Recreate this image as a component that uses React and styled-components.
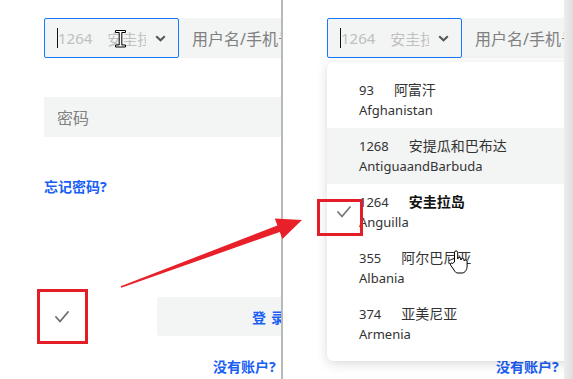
import React from 'react';
import styled, { createGlobalStyle } from 'styled-components';

const GlobalStyle = createGlobalStyle`
  html, body {
    margin: 0;
    padding: 0;
    background: #fff;
  }
  body {
    font-family: 'Noto Sans', 'Noto Sans CJK SC', sans-serif;
  }
`;

const Stage = styled.div`
  position: relative;
  display: flex;
  width: 573px;
  height: 379px;
  overflow: hidden;
  background: #fff;
`;

const Panel = styled.div`
  position: relative;
  flex: none;
  width: 281px;
  height: 100%;
  overflow: hidden;
`;

const Divider = styled.div`
  flex: none;
  width: 2px;
  background: #b9b9b9;
`;

const EdgeShadow = styled.div`
  flex: 1;
  background: linear-gradient(to right, #ededed, #dedede);
`;

const Form = styled.div`
  display: flex;
  flex-direction: column;
  width: 400px;
  padding: 18px 0 0 44px;
`;

const TopRow = styled.div`
  display: flex;
  height: 40px;
`;

const SelectWrap = styled.div`
  position: relative;
  flex: none;
  width: 135px;
`;

const SelectBox = styled.div`
  box-sizing: border-box;
  display: flex;
  align-items: center;
  height: 40px;
  padding: 0 12px 0 13px;
  border: 1px solid #1677ff;
  border-radius: 2px;
  background: #f3f4f4;
  font-size: 15px;
  color: #c0c0c0;
`;

const Caret = styled.span`
  width: 1px;
  height: 20px;
  margin-left: -1px;
  background: #111;
`;

const SelectValue = styled.div`
  display: flex;
  gap: 15px;
  width: 88px;
  overflow: hidden;
  white-space: nowrap;
`;

const Chevron = styled.svg`
  margin-left: auto;
`;

const Field = styled.div`
  box-sizing: border-box;
  display: flex;
  align-items: center;
  height: 40px;
  padding-left: 13px;
  background: #f3f4f4;
  font-size: 16px;
  color: #808080;
  white-space: nowrap;
  flex: 1;
`;

const PasswordField = styled(Field)`
  flex: none;
  margin-top: 39px;
`;

const BlueLink = styled.div`
  font-size: 14px;
  font-weight: 700;
  line-height: 20px;
  color: #1a5ff5;
  white-space: nowrap;
`;

const ForgotLink = styled(BlueLink)`
  margin-top: 40px;
`;

const BottomRow = styled.div`
  display: flex;
  align-items: center;
  height: 39px;
  margin-top: 100px;
`;

const CheckCell = styled.div`
  flex: none;
  width: 113px;
  padding-left: 11px;
  box-sizing: border-box;
  display: flex;
  align-items: center;
`;

const LoginButton = styled.div`
  flex: none;
  width: 228px;
  height: 39px;
  display: flex;
  align-items: center;
  justify-content: center;
  border-radius: 3px;
  background: #f3f4f4;
  font-size: 14px;
  font-weight: 700;
  color: #1a5ff5;
  letter-spacing: 5px;
`;

const NoAccount = styled(BlueLink)`
  margin-top: 21px;
  padding-left: 169px;
`;

const Dropdown = styled.div`
  position: absolute;
  top: 44px;
  left: 0;
  width: 270px;
  padding: 10px 0 9px;
  border-radius: 6px;
  background: #fff;
  box-shadow: 0 3px 12px rgba(0, 0, 0, 0.14), 0 0 1px rgba(0, 0, 0, 0.08);
  z-index: 2;
`;

const Option = styled.div`
  position: relative;
  box-sizing: border-box;
  height: 56px;
  padding: 8px 0 0 32px;
  background: ${(p) => (p.$hover ? '#f3f4f4' : '#fff')};
  font-size: 13px;
  line-height: 20px;
  color: #333;
  white-space: nowrap;
`;

const OptionTop = styled.div`
  display: flex;
  align-items: baseline;
`;

const Code = styled.span`
  margin-right: 20px;
`;

const Name = styled.span`
  font-size: 14px;
  font-weight: ${(p) => (p.$bold ? 700 : 400)};
  color: ${(p) => (p.$bold ? '#111' : '#333')};
`;

const OptionCheck = styled.span`
  position: absolute;
  left: 10px;
  top: 22px;
  display: flex;
`;

const RedBox = styled.div`
  position: absolute;
  left: ${(p) => p.$x}px;
  top: ${(p) => p.$y}px;
  width: ${(p) => p.$w}px;
  height: ${(p) => p.$h}px;
  box-sizing: border-box;
  border: 3px solid #e41e26;
  z-index: 5;
`;

const Overlay = styled.svg`
  position: absolute;
  left: 0;
  top: 0;
  z-index: 6;
  pointer-events: none;
`;

const CheckIcon = ({ color = '#6b6b6b' }) => (
  <svg width="14" height="12" viewBox="0 0 14 12">
    <polyline points="1,6 5,10.5 13,1" fill="none" stroke={color} strokeWidth="1.8" strokeLinecap="round" strokeLinejoin="round" />
  </svg>
);

const countries = [
  { code: '93', cn: '阿富汗', en: 'Afghanistan' },
  { code: '1268', cn: '安提瓜和巴布达', en: 'AntiguaandBarbuda', hover: true },
  { code: '1264', cn: '安圭拉岛', en: 'Anguilla', selected: true },
  { code: '355', cn: '阿尔巴尼亚', en: 'Albania' },
  { code: '374', cn: '亚美尼亚', en: 'Armenia' },
];

const LoginForm = ({ open }) => (
  <Form>
    <TopRow>
      <SelectWrap>
        <SelectBox>
          <Caret />
          <SelectValue>
            <span>1264</span>
            <span>安圭拉岛</span>
          </SelectValue>
          <Chevron width="11" height="7" viewBox="0 0 11 7">
            <polyline points="1.2,1.2 5.5,5.3 9.8,1.2" fill="none" stroke="#555" strokeWidth="2" />
          </Chevron>
        </SelectBox>
        {open && (
          <Dropdown>
            {countries.map((c) => (
              <Option key={c.code} $hover={c.hover}>
                {c.selected && (
                  <OptionCheck>
                    <CheckIcon color="#7a7a7a" />
                  </OptionCheck>
                )}
                <OptionTop>
                  <Code>{c.code}</Code>
                  <Name $bold={c.selected}>{c.cn}</Name>
                </OptionTop>
                <div>{c.en}</div>
              </Option>
            ))}
          </Dropdown>
        )}
      </SelectWrap>
      <Field>用户名/手机号</Field>
    </TopRow>
    <PasswordField>密码</PasswordField>
    <ForgotLink>忘记密码?</ForgotLink>
    <BottomRow>
      <CheckCell>
        <CheckIcon />
      </CheckCell>
      <LoginButton>登录</LoginButton>
    </BottomRow>
    <NoAccount>没有账户?</NoAccount>
  </Form>
);

const App = () => (
  <>
    <GlobalStyle />
    <Stage>
      <Panel>
        <LoginForm />
      </Panel>
      <Divider />
      <Panel>
        <LoginForm open />
      </Panel>
      <EdgeShadow />

      <RedBox $x={37} $y={289} $w={51} $h={55} />
      <RedBox $x={317} $y={199} $w={46} $h={37} />

      <Overlay width="573" height="379" viewBox="0 0 573 379">
        <polygon
          points="120.7,286.3 277.4,225.4 274.8,218.4 302,220 282.4,239 279.8,232 121.3,287.7"
          fill="#e8202a"
        />
        {/* text cursor */}
        <path
          d="M115.5,30.5 H125.5 V32.5 H121.8 V45 H125.5 V47 H115.5 V45 H119.2 V32.5 H115.5 Z"
          fill="#fff"
          stroke="#000"
          strokeWidth="1"
        />
        {/* hand cursor */}
        <path
          d="M454.5,262 V252.5 a1.6,1.6 0 0 1 3.2,0 V259 a1.6,1.6 0 0 1 3.2,0 V260 a1.6,1.6 0 0 1 3.2,0 V261 a1.6,1.6 0 0 1 3,0 V266 c0,3.5 -2,7 -5,7 H458 c-2,0 -3,-1 -4,-3 L450.5,265 a1.3,1.3 0 0 1 2,-1.6 Z"
          fill="#fff"
          stroke="#000"
          strokeWidth="1"
        />
      </Overlay>
    </Stage>
  </>
);

export default App;
